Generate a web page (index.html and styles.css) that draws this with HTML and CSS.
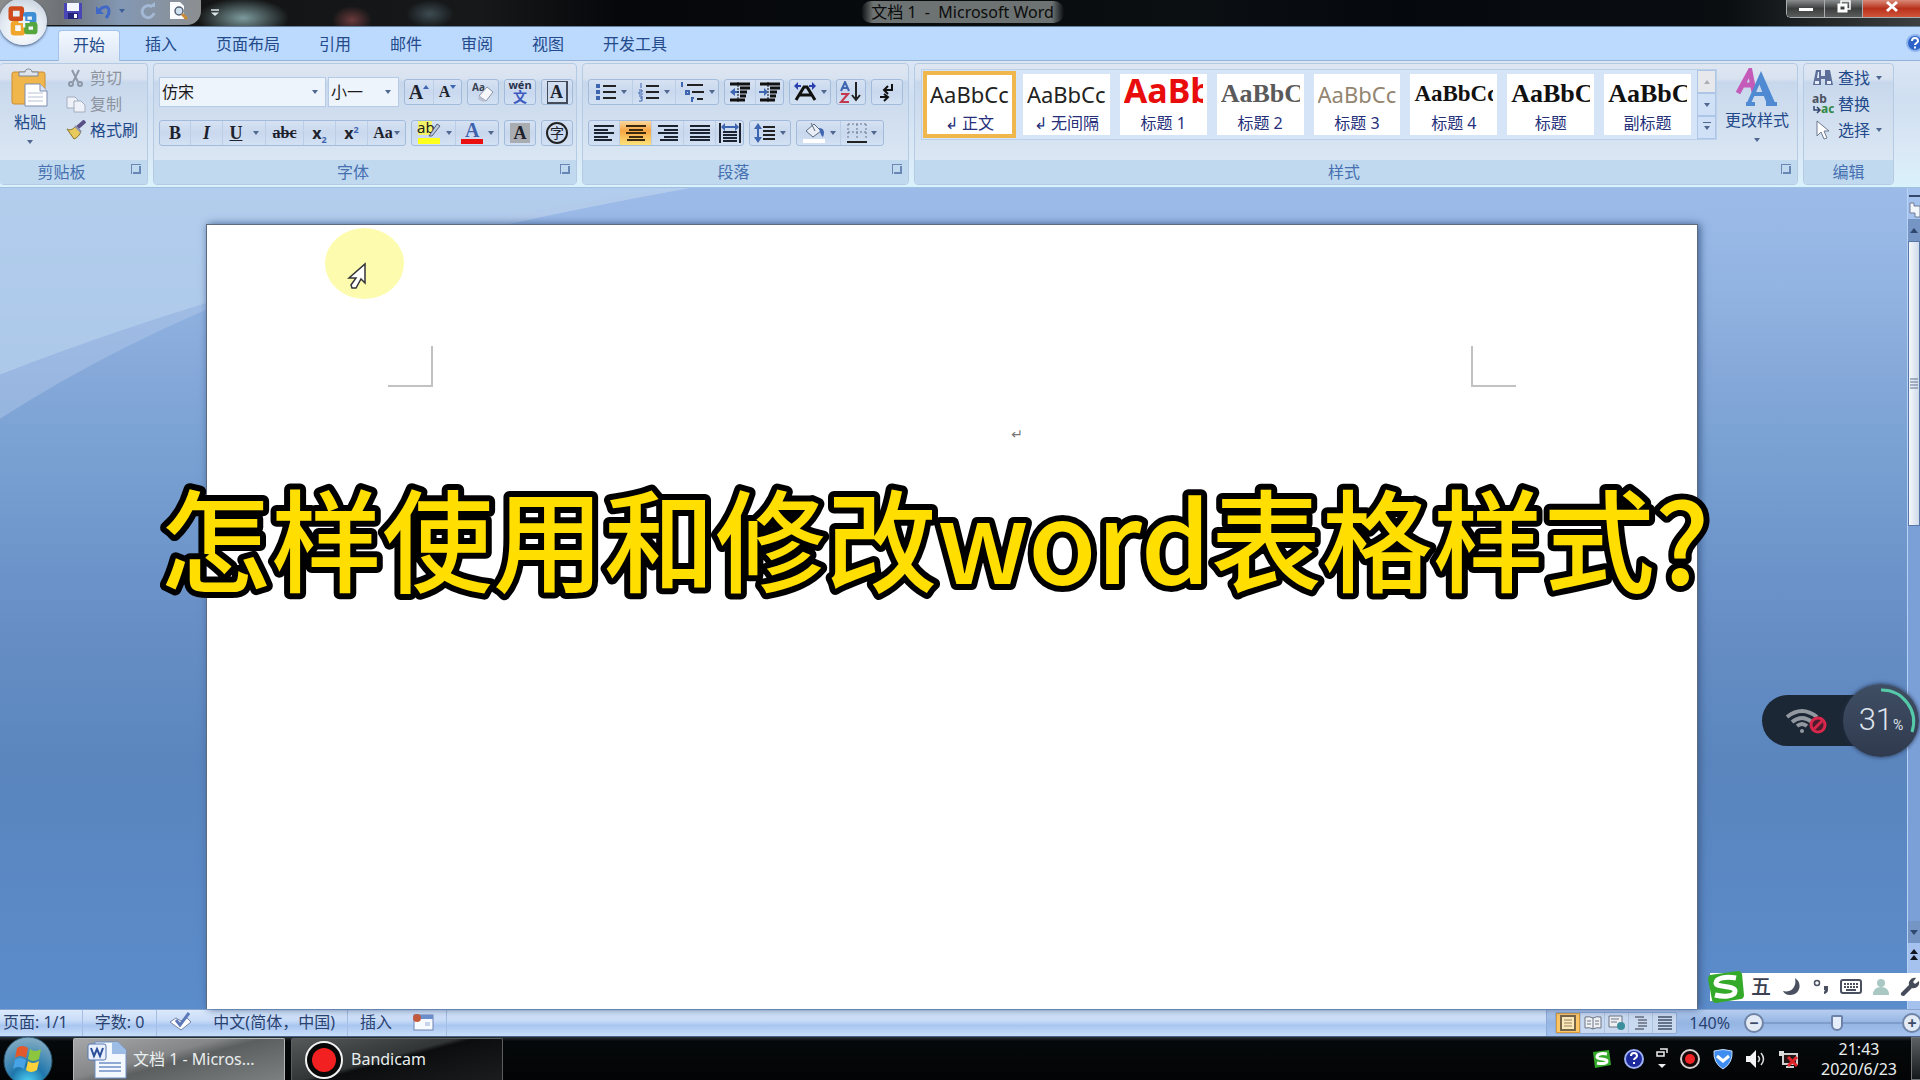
FILE: index.html
```html
<!DOCTYPE html>
<html lang="zh-CN">
<head>
<meta charset="utf-8">
<title>文档 1 - Microsoft Word</title>
<link rel="stylesheet" href="styles.css">
</head>
<body>
<div class="screen">
  <header class="titlebar">
    <div class="quick-access">
      <button class="icon-btn" aria-label="保存"><svg width="20" height="18" viewBox="0 0 20 18"><path d="M1 1h18v16H1z" fill="#4a45b5"/><path d="M4 1h12v8H4z" fill="#f4f6ff"/><path d="M5 11h10v6H5z" fill="#23237c"/><path d="M11 12h3v4h-3z" fill="#fff"/></svg></button>
      <button class="icon-btn undo" aria-label="撤消"><svg width="18" height="18" viewBox="0 0 18 18"><path d="M1 4v8h8z" fill="#3f68c8"/><path d="M4 9C7 4 14 3 14 9c0 3-1 5-3 7" fill="none" stroke="#3f68c8" stroke-width="3"/></svg></button>
      <span class="caret blue"></span>
      <button class="icon-btn redo" aria-label="重复"><svg width="18" height="18" viewBox="0 0 18 18"><path d="M13 5a6 6 0 1 0 2 6" fill="none" stroke="#a3b8d4" stroke-width="3"/><path d="M9 5h7V0z" fill="#a3b8d4"/></svg></button>
      <button class="icon-btn preview" aria-label="打印预览"><svg width="20" height="18" viewBox="0 0 20 18"><path d="M1 0h10l4 4v13H1z" fill="#fbfcff"/><circle cx="10" cy="9" r="4" fill="#cfe2f2" stroke="#555f70" stroke-width="1.5"/><path d="M13 12l5 5" stroke="#c98b35" stroke-width="3"/></svg></button>
    </div>
    <button class="icon-btn customize" aria-label="自定义快速访问工具栏"><svg width="10" height="8" viewBox="0 0 10 8"><path d="M1 1h8" stroke="#dde5ea" stroke-width="1.5"/><path d="M1 3.500h8L5 7z" fill="#dde5ea"/></svg></button>
    <h1 class="window-title"><span>文档 1&nbsp; -&nbsp; Microsoft Word</span></h1>
    <div class="window-buttons">
      <button aria-label="最小化"><svg width="14" height="14" viewBox="0 0 14 14"><path d="M0 8h14v3H0z" fill="#fff"/></svg></button>
      <button aria-label="还原"><svg width="14" height="14" viewBox="0 0 14 14"><path d="M4 4V1h9v8h-3" fill="none" stroke="#fff" stroke-width="1.500"/><path d="M2 5h7v6H2z" fill="none" stroke="#fff" stroke-width="3"/></svg></button>
      <button class="close" aria-label="关闭"><svg width="14" height="14" viewBox="0 0 14 14"><path d="M2 2l10 9M12 2L2 11" stroke="#fff" stroke-width="3"/></svg></button>
    </div>
  </header>

  <nav class="tabs">
    <button class="tab active">开始</button>
    <button class="tab">插入</button>
    <button class="tab">页面布局</button>
    <button class="tab">引用</button>
    <button class="tab">邮件</button>
    <button class="tab">审阅</button>
    <button class="tab">视图</button>
    <button class="tab">开发工具</button>
    <button class="icon-btn help" aria-label="帮助"><svg width="18" height="18" viewBox="0 0 18 18"><circle cx="9" cy="9" r="8" fill="#2f62c9" stroke="#8eb4ee" stroke-width="2"/><path d="M6 7c0-4 6-4 6 0 0 2-3 2-3 4M9 12.500v2" fill="none" stroke="#fff" stroke-width="2"/></svg></button>
  </nav>
  <button class="office-button" aria-label="Office 按钮"><svg width="38" height="38" viewBox="0 0 34 34"><g fill="none" stroke-width="4"><rect x="6" y="5" width="10" height="9" rx="1" stroke="#cf4a1c"/><rect x="19" y="10" width="8" height="7" rx="1" stroke="#3f8fd6"/><rect x="8" y="18" width="9" height="9" rx="1" stroke="#f0a52c"/><rect x="20" y="19" width="8" height="7" rx="1" stroke="#55a63c"/></g><path d="M13 17h10M18 12v10" stroke="#e9f2fb" stroke-width="2"/></svg></button>

  <div class="ribbon">
    <section class="group clipboard">
      <div class="group-body">
        <button class="big-btn"><svg width="38" height="40" viewBox="0 0 38 40"><rect x="1" y="4" width="33" height="32" rx="2" fill="#f0b54b" stroke="#c98f36"/><path d="M8 8V4h6c0-4 7-4 7 0h6v4z" fill="#dfe3ea" stroke="#7d8796"/><path d="M14 16h15l7 7v15H14z" fill="#fff" stroke="#7e8db0"/><path d="M29 16v7h7" fill="#dce5f5" stroke="#7e8db0"/><path d="M17 25h15M17 29h15M17 33h15" stroke="#b7c2d8"/></svg><span>粘贴</span><i class="caret"></i></button>
        <div class="small-stack">
          <button class="small-btn disabled"><svg width="20" height="20" viewBox="0 0 20 20" fill="none" stroke="#8f98a8" stroke-width="2"><path d="M6 2l6 12M13 2L7 14"/><circle cx="5" cy="16" r="2"/><circle cx="14" cy="16" r="2"/></svg>剪切</button>
          <button class="small-btn disabled"><svg width="20" height="20" viewBox="0 0 20 20" fill="#eef2f8" stroke="#a4aebf"><path d="M1 3h8l3 3v8H1z"/><path d="M8 7h7l4 4v7H8z"/></svg>复制</button>
          <button class="small-btn"><svg width="20" height="20" viewBox="0 0 20 20"><path d="M19 1l-8 7" stroke="#5a4f86" stroke-width="4"/><path d="M1 9c4 2 6 0 9-3l5 5c-1 4-4 7-7 8z" fill="#e7c95c" stroke="#8a7432"/><path d="M9 6l6 6" stroke="#8a93b8" stroke-width="2"/></svg>格式刷</button>
        </div>
      </div>
      <footer class="group-label"><span>剪贴板</span><button class="launcher" aria-label="剪贴板选项"></button></footer>
    </section>

    <section class="group font">
      <div class="group-body rows">
        <div class="row">
          <div class="combos">
            <label class="combo family"><select aria-label="字体"><option>仿宋</option></select><i class="caret"></i></label>
            <label class="combo size"><select aria-label="字号"><option>小一</option></select><i class="caret"></i></label>
          </div>
          <div class="seg serif"><button class="w28" aria-label="增大字体"><b class="t20">A</b><i class="tri up"></i></button><button class="w28" aria-label="缩小字体"><b class="t16">A</b><i class="tri"></i></button></div>
          <div class="seg"><button class="w30" aria-label="清除格式"><svg width="24" height="22" viewBox="0 0 24 22"><text x="1" y="10" class="svg-aa">Aa</text><path d="M8 15l8-9 6 5-7 9z" fill="#f6f7fb" stroke="#8b93a5"/><path d="M8 15l7 5-3 1-5-3z" fill="#b9c1d2"/></svg></button></div>
          <div class="seg"><button class="w30 pinyin" aria-label="拼音指南"><span>wén</span><b>文</b></button></div>
          <div class="seg serif"><button class="w30" aria-label="字符边框"><b class="boxed">A</b></button></div>
        </div>
        <div class="row">
          <div class="seg serif format">
            <button class="w30" aria-label="加粗"><b>B</b></button><button class="w32" aria-label="倾斜"><em>I</em></button><button class="w44" aria-label="下划线"><u>U</u><i class="caret"></i></button><button class="w36 strike" aria-label="删除线"><s>abc</s></button><button class="w32 sans" aria-label="下标"><b>x<sub>2</sub></b></button><button class="w32 sans" aria-label="上标"><b>x<sup>2</sup></b></button><button class="w36" aria-label="更改大小写"><span>Aa</span><i class="caret"></i></button>
          </div>
          <div class="seg">
            <button class="w44" aria-label="突出显示"><svg width="26" height="24" viewBox="0 0 26 24"><rect x="2" y="0" width="14" height="14" fill="#f3f36a"/><text x="1" y="12" class="svg-ab">ab</text><path d="M13 15L21 3l3 2-8 10z" fill="#b9c6dc" stroke="#55617b"/><path d="M2 17h22v6H2z" fill="#ffff1e"/></svg><i class="caret"></i></button>
            <button class="w44" aria-label="字体颜色"><svg width="24" height="24" viewBox="0 0 24 24"><text x="5" y="16" class="svg-a">A</text><path d="M1 18h22v5H1z" fill="#ea1010"/></svg><i class="caret"></i></button>
          </div>
          <div class="seg serif"><button class="w30" aria-label="字符底纹"><b class="shaded">A</b></button></div>
          <div class="seg"><button class="w30" aria-label="带圈字符"><span class="circled">字</span></button></div>
        </div>
      </div>
      <footer class="group-label"><span>字体</span><button class="launcher" aria-label="字体选项"></button></footer>
    </section>

    <section class="group paragraph">
      <div class="group-body rows">
        <div class="row">
          <div class="seg">
            <button class="w44" aria-label="项目符号"><svg width="22" height="20" viewBox="0 0 22 20"><path d="M8 4h13M8 10h13M8 16h13" stroke="#222" stroke-width="2"/><path d="M1 4h4M1 10h4M1 16h4" stroke="#3e65b0" stroke-width="4"/></svg><i class="caret"></i></button><button class="w44" aria-label="编号"><svg width="22" height="20" viewBox="0 0 22 20"><path d="M8 4h13M8 10h13M8 16h13" stroke="#222" stroke-width="2"/><path d="M3 1v5M1 8h3v2H1v2h4M1 14h3v5H1M2 16h2" fill="none" stroke="#3e65b0"/></svg><i class="caret"></i></button><button class="w44" aria-label="多级列表"><svg width="26" height="22" viewBox="0 0 26 22"><path d="M8 4h16M13 11h12M18 18h6" stroke="#222" stroke-width="2"/><path d="M3 1v5M7 9v4h3v-3H7M13 16v5M12 17h3" fill="none" stroke="#3e65b0" stroke-width="2"/></svg><i class="caret"></i></button>
          </div>
          <div class="seg"><button class="w30" aria-label="减少缩进"><svg width="22" height="20" viewBox="0 0 22 20"><path d="M1 2h20M11 6h10M11 10h7M11 14h6M1 18h15" stroke="#111" stroke-width="3"/><path d="M1 10l5-4v3h4v2H6v3z" fill="#3e65b0"/><path d="M9 0v20" stroke="#111" stroke-dasharray="2 1"/></svg></button><button class="w28" aria-label="增加缩进"><svg width="22" height="20" viewBox="0 0 22 20"><path d="M1 2h20M11 6h10M11 10h7M11 14h6M1 18h15" stroke="#111" stroke-width="3"/><path d="M9 10L5 6v3H0v2h5v3z" fill="#3e65b0"/><path d="M9 0v20" stroke="#111" stroke-dasharray="2 1"/></svg></button></div>
          <div class="seg"><button class="w40" aria-label="中文版式"><svg width="24" height="20" viewBox="0 0 24 20"><path d="M1 4l4-4v3h3v2H5v3zM23 4l-4-4v3h-3v2h3v3z" fill="#2b3fae"/><path d="M3 18l8-13h3l8 13M7 13h11" fill="none" stroke="#111" stroke-width="3"/></svg><i class="caret"></i></button></div>
          <div class="seg"><button class="w28" aria-label="排序"><svg width="24" height="22" viewBox="0 0 24 22"><path d="M2 10l4-9 4 9M3 7h6" fill="none" stroke="#3e65b0" stroke-width="2"/><path d="M2 13h7l-7 8h8" fill="none" stroke="#c2394f" stroke-width="2"/><path d="M17 1v17M13 14l4 5 4-5" fill="none" stroke="#222" stroke-width="2"/></svg></button></div>
          <div class="seg"><button class="w30" aria-label="显示编辑标记"><svg width="18" height="20" viewBox="0 0 18 20"><path d="M14 2v6H7M10 4L6 8l4 4" fill="none" stroke="#111" stroke-width="2"/><path d="M2 15h8M6 12l4 3-4 4" fill="none" stroke="#111" stroke-width="2"/></svg></button></div>
        </div>
        <div class="row">
          <div class="seg align">
            <button class="w30" aria-label="左对齐"><svg width="20" height="16" viewBox="0 0 20 16"><path d="M0 1h20M0 5h14M0 8h20M0 12h14M0 15h18" stroke="#1b2230" stroke-width="2"/></svg></button><button class="w32 on" aria-label="居中"><svg width="20" height="16" viewBox="0 0 20 16"><path d="M0 1h20M3 5h14M0 8h20M3 12h14M1 15h18" stroke="#3b2a0e" stroke-width="2"/></svg></button><button class="w32" aria-label="右对齐"><svg width="20" height="16" viewBox="0 0 20 16"><path d="M0 1h20M6 5h14M0 8h20M6 12h14M2 15h18" stroke="#1b2230" stroke-width="2"/></svg></button><button class="w32" aria-label="两端对齐"><svg width="20" height="16" viewBox="0 0 20 16"><path d="M0 1h20M0 5h20M0 8h20M0 12h20M0 15h20" stroke="#1b2230" stroke-width="2"/></svg></button><button class="w28" aria-label="分散对齐"><svg width="22" height="20" viewBox="0 0 22 20"><path d="M1 0v20M21 0v20M4 9h14M4 12h14M4 15h14M4 18h14" stroke="#1b2230" stroke-width="2"/><path d="M2 4l4-4v3h10V0l4 4-4 4V5H6v3z" fill="#3e65b0"/></svg></button>
          </div>
          <div class="seg"><button class="w40" aria-label="行距"><svg width="22" height="20" viewBox="0 0 22 20"><path d="M9 4h12M9 8h12M9 12h12M9 16h12" stroke="#222" stroke-width="2"/><path d="M4 0l4 6H5v8h3l-4 6-4-6h3V6H0z" fill="#3e65b0"/></svg><i class="caret"></i></button></div>
          <div class="seg"><button class="w44" aria-label="底纹"><svg width="24" height="22" viewBox="0 0 24 22"><path d="M4 9l8-7 7 7-8 6z" fill="#e9eef7" stroke="#5c6880"/><path d="M9 1l4 8" stroke="#5c6880"/><path d="M17 6c5 0 6 4 4 9-2-1-3-5-4-9" fill="#3e65b0"/><path d="M1 17h22v4H1z" fill="#fff"/></svg><i class="caret"></i></button><button class="w44" aria-label="边框"><svg width="20" height="20" viewBox="0 0 20 20"><path d="M1 1h18M1 9h18M1 1v16M10 1v16M19 1v16" stroke="#66728a" stroke-dasharray="2 2"/><path d="M0 19h20" stroke="#222" stroke-width="2"/></svg><i class="caret"></i></button></div>
        </div>
      </div>
      <footer class="group-label"><span>段落</span><button class="launcher" aria-label="段落选项"></button></footer>
    </section>

    <section class="group styles">
      <div class="group-body">
        <div class="gallery">
          <button class="style selected"><span class="sample sans">AaBbCc</span><span class="name">↲ 正文</span></button>
          <button class="style"><span class="sample sans">AaBbCc</span><span class="name">↲ 无间隔</span></button>
          <button class="style"><span class="sample h1">AaBb</span><span class="name">标题 1</span></button>
          <button class="style"><span class="sample serif gray">AaBbC</span><span class="name">标题 2</span></button>
          <button class="style"><span class="sample sans tan">AaBbCc</span><span class="name">标题 3</span></button>
          <button class="style"><span class="sample serif tight">AaBbCc</span><span class="name">标题 4</span></button>
          <button class="style"><span class="sample serif">AaBbC</span><span class="name">标题</span></button>
          <button class="style"><span class="sample serif">AaBbC</span><span class="name">副标题</span></button>
          <div class="gallery-scroll"><button class="off" aria-label="上一行"><i class="caret flip"></i></button><button aria-label="下一行"><i class="caret"></i></button><button aria-label="更多样式"><i class="caret line"></i></button></div>
        </div>
        <button class="big-btn change"><svg width="42" height="38" viewBox="0 0 42 38"><path d="M2 25L14 3l4 21M6 17h11" fill="none" stroke="#c55bb8" stroke-width="5"/><path d="M13 35L25 8l12 27M17 26h15M10 36h9M30 36h11" fill="none" stroke="#4f8ad3" stroke-width="4"/><path d="M25 6l13 30h-7L22 13z" fill="#4f8ad3"/></svg><span>更改样式</span><i class="caret"></i></button>
      </div>
      <footer class="group-label"><span>样式</span><button class="launcher" aria-label="样式选项"></button></footer>
    </section>

    <section class="group editing">
      <div class="group-body">
        <div class="small-stack">
          <button class="small-btn"><svg width="22" height="20" viewBox="0 0 22 20"><path d="M4 2h5v6h4V2h5l3 15h-8v-6H9v6H1z" fill="#5d6f98"/><path d="M3 13h4v3H3zM15 13h4v3h-4zM6 4h1v6H5z" fill="#e6edf8"/></svg>查找<i class="caret"></i></button>
          <button class="small-btn"><svg width="22" height="20" viewBox="0 0 22 20"><text x="0" y="9" class="svg-rep">ab</text><text x="9" y="19" class="svg-rep green">ac</text><path d="M2 12v4h5M5 13l3 3-3 3" fill="none" stroke="#35456b" stroke-width="1.500"/></svg>替换</button>
          <button class="small-btn"><svg width="22" height="20" viewBox="0 0 22 20"><path d="M5 1v15l4-4 3 7 3-1-3-7h5z" fill="#fff" stroke="#6e7890"/></svg>选择<i class="caret"></i></button>
        </div>
      </div>
      <footer class="group-label"><span>编辑</span></footer>
    </section>
  </div>

  <main class="workspace">
    <svg class="swoosh" viewBox="0 0 1920 822" preserveAspectRatio="none"><path d="M0 0H690Q300 70 0 187z" fill="#b9d3ee" opacity=".75"/><path d="M690 0Q300 70 0 187V231Q300 40 690 0z" fill="#b4c9ec" opacity=".45"/></svg>
    <article class="page">
      <div class="corners"><span class="corner left"></span><span class="corner right"></span></div>
      <p class="paragraph-mark">↵</p>
    </article>
    <aside class="scrollbar">
      <button class="ruler" aria-label="标尺"><svg width="12" height="24" viewBox="0 0 12 24"><path d="M1 2h11" stroke="#34496d" stroke-width="2"/><path d="M2 9h4v3h6v11H7v-4H2z" fill="#f3f6fb" stroke="#6d7c96"/></svg></button>
      <button class="arrow" aria-label="向上滚动"><i class="caret flip"></i></button>
      <div class="track"><div class="thumb"><svg width="8" height="12" viewBox="0 0 8 12"><path d="M0 1h8M0 4h8M0 7h8M0 10h8" stroke="#5f708c"/></svg></div></div>
      <button class="arrow" aria-label="向下滚动"><i class="caret"></i></button>
      <button class="jump" aria-label="前一页"><svg width="10" height="12" viewBox="0 0 10 12"><path d="M5 0l4 5H1zM5 6l4 5H1z" fill="#10151f"/></svg></button>
    </aside>
    <div class="pointer"><svg width="20" height="28" viewBox="0 0 20 28"><path d="M18 2v19l-4-4-5 9H5l-1-3 5-7H2z" fill="#fff" stroke="#33333b" stroke-width="1.500"/></svg></div>
    <h2 class="caption"><svg width="1560" height="150" viewBox="0 0 1560 150"><text x="0" y="114">怎样使用和修改word表格样式?</text></svg></h2>
    <div class="battery">
      <svg class="wifi" width="42" height="26" viewBox="0 0 42 26"><g fill="none" stroke="#9298a0" stroke-width="4"><path d="M1 9q15-12 30 0"/><path d="M6 14q10-8 20 0"/><path d="M11 18q5-4 10 0"/></g><circle cx="16" cy="23" r="2" fill="#9298a0"/><circle cx="32" cy="17" r="7" fill="#4b1c2d" stroke="#d9274c" stroke-width="3"/><path d="M28 21l8-8" stroke="#d9274c" stroke-width="3"/></svg>
      <div class="gauge"><svg class="arc" width="76" height="76" viewBox="0 0 76 76"><path d="M38 6a32 32 0 0 1 31 42" fill="none" stroke="#55c9a8" stroke-width="3"/></svg><span>31</span><small>%</small></div>
    </div>
    <div class="ime">
      <svg class="sogou" width="38" height="34" viewBox="0 0 38 34"><path d="M3 5l28-4q3 0 4 3l2 21q0 3-3 4L9 33q-3 0-4-3L1 9q0-3 2-4z" fill="#35a929"/><path d="M29 8C19 6 9 8 9 13s19 2 19 8-12 6-20 4" fill="none" stroke="#fff" stroke-width="5"/></svg>
      <span class="ime-mode">五</span>
      <svg width="20" height="20" viewBox="0 0 20 20"><path d="M13 1c8 5 5 17-5 17-4 0-6-2-7-4 8 2 14-4 12-13z" fill="#4a5060"/></svg>
      <svg width="18" height="20" viewBox="0 0 18 20"><circle cx="5" cy="6" r="2.500" fill="none" stroke="#4a5060" stroke-width="1.500"/><path d="M12 9h4v4q0 3-4 4v-2l1-2h-1z" fill="#4a5060"/></svg>
      <svg width="22" height="20" viewBox="0 0 22 20"><rect x="1" y="3" width="20" height="13" rx="2" fill="none" stroke="#4a5060" stroke-width="2"/><path d="M4 7h14M4 10h14" stroke="#4a5060" stroke-width="2" stroke-dasharray="2 1"/><path d="M6 13h10" stroke="#4a5060" stroke-width="2"/></svg>
      <svg width="18" height="20" viewBox="0 0 18 20"><circle cx="9" cy="6" r="4" fill="#a9c8c4"/><path d="M1 18q0-8 8-8t8 8z" fill="#a9c8c4"/></svg>
      <svg width="20" height="20" viewBox="0 0 20 20"><path d="M1 16l8-8c-1-4 3-8 7-7l-3 4 2 2 4-3c1 5-3 8-7 7l-8 8q-4 0-3-3z" fill="#454b58"/></svg>
    </div>
  </main>

  <footer class="statusbar">
    <span class="cell">页面: 1/1</span>
    <span class="cell">字数: 0</span>
    <span class="cell last"><svg width="24" height="20" viewBox="0 0 24 20"><path d="M1 10l6-4 5 3 6-3 4 4-10 8z" fill="#fff" stroke="#7384a6"/><path d="M7 8l4 5L20 1" fill="none" stroke="#5b78b8" stroke-width="3"/></svg></span>
    <span class="cell lang">中文(简体，中国)</span>
    <span class="cell insert">插入<svg width="22" height="18" viewBox="0 0 22 18"><rect x="2" y="2" width="19" height="15" fill="#f7faff" stroke="#6e84b2"/><path d="M2 2h19v4H2z" fill="#6d8fce"/><circle cx="5" cy="5" r="4" fill="#c65a3c"/><path d="M13 9h5v4h-5z" fill="#c7d4ec"/></svg></span>
    <div class="view-tools">
      <div class="views">
        <button class="on" aria-label="页面视图"><svg width="18" height="16" viewBox="0 0 18 16"><path d="M2 1h14v14H2z" fill="#fbe8b8" stroke="#756448" stroke-width="2"/><path d="M5 5h8M5 8h8M5 11h8" stroke="#98825c"/></svg></button>
        <button aria-label="阅读版式视图"><svg width="18" height="16" viewBox="0 0 18 16"><path d="M1 2q5-1 8 1 3-2 8-1v11q-5-1-8 1-3-2-8-1zM9 3v11M3 6h4M3 9h4M11 6h4M11 9h4" fill="#eef0f2" stroke="#6d7486"/></svg></button>
        <button aria-label="Web 版式视图"><svg width="18" height="16" viewBox="0 0 18 16"><path d="M1 1h13v11H1z" fill="#eef0f2" stroke="#6d7486"/><path d="M3 4h8M3 7h6" stroke="#6d7486"/><circle cx="13" cy="11" r="4" fill="#3c8f9c"/></svg></button>
        <button aria-label="大纲视图"><svg width="18" height="16" viewBox="0 0 18 16"><path d="M3 2h9M6 5h9M6 8h9M6 11h9M3 14h9" stroke="#7e879a" stroke-width="2"/></svg></button>
        <button aria-label="普通视图"><svg width="18" height="16" viewBox="0 0 18 16"><path d="M2 2h14M2 5h14M2 8h14M2 11h14M2 14h14" stroke="#66718a" stroke-width="2"/></svg></button>
      </div>
      <button class="zoom-level">140%</button>
      <button class="round" aria-label="缩小">−</button>
      <input class="zoom" type="range" min="0" max="100" value="53" aria-label="显示比例">
      <button class="round" aria-label="放大">+</button>
    </div>
  </footer>

  <footer class="taskbar">
    <button class="start" aria-label="开始菜单"><svg width="50" height="44" viewBox="0 0 50 44"><defs><radialGradient id="orb" cx=".5" cy=".95" r=".9"><stop offset="0" stop-color="#4fd6f7"/><stop offset=".4" stop-color="#1f77ad"/><stop offset="1" stop-color="#7fa9c2"/></radialGradient></defs><circle cx="25" cy="24" r="24" fill="url(#orb)" stroke="#2b5872"/><path d="M14 11q5-4 11 0l-2 10q-6-4-11 0z" fill="#e4592b"/><path d="M27 12q5 4 11 0l-2 10q-6 4-11 0z" fill="#8cc63e"/><path d="M12 23q5-4 11 0l-2 9q-6-4-11 0z" fill="#48a3e6"/><path d="M25 24q5 4 11 0l-2 9q-6 4-11 0z" fill="#fcd23c"/></svg></button>
    <button class="task active"><svg width="40" height="38" viewBox="0 0 40 38"><path d="M8 1h23l8 8v28H8z" fill="#f3f7fe" stroke="#6f8fc4"/><path d="M25 1h6l8 8v4H25z" fill="#9dbce6"/><path d="M12 22h22M12 26h22M12 30h22" stroke="#8fa9d4" stroke-width="2"/><rect x="1" y="3" width="18" height="16" rx="2" fill="#e9f0fb" stroke="#5577b4"/><path d="M4 7l3 8 3-7 3 7 3-8" fill="none" stroke="#2c4f9b" stroke-width="2"/></svg><span>文档 1 - Micros...</span></button>
    <button class="task"><svg width="42" height="40" viewBox="0 0 42 40"><circle cx="21" cy="20" r="18" fill="#080808" stroke="#f2f2f2" stroke-width="2"/><circle cx="21" cy="20" r="12" fill="#f22020"/></svg><span>Bandicam</span></button>
    <div class="tray">
      <svg width="20" height="20" viewBox="0 0 20 20"><path d="M1 3l16-2 2 15-16 3z" fill="#35a929"/><path d="M15 5C9 4 5 5 5 8s10 1 10 4-6 3-10 2" fill="none" stroke="#fff" stroke-width="3"/></svg>
      <svg width="22" height="22" viewBox="0 0 22 22"><circle cx="11" cy="11" r="9" fill="#1c2a9c" stroke="#9eb0f2" stroke-width="2"/><path d="M8 8c0-4 6-4 6 0 0 2-3 2-3 4M11 14v2" fill="none" stroke="#fff" stroke-width="2"/></svg>
      <svg width="12" height="22" viewBox="0 0 12 22"><path d="M4 1h7v4M1 4h7v4H1z" fill="none" stroke="#eee" stroke-width="1.500"/><path d="M2 16h8l-4 4z" fill="#eee"/></svg>
      <svg width="22" height="22" viewBox="0 0 22 22"><circle cx="11" cy="11" r="9" fill="#160808" stroke="#d8d0d0" stroke-width="2"/><circle cx="11" cy="11" r="5" fill="#ee2222"/></svg>
      <svg width="22" height="22" viewBox="0 0 22 22"><path d="M2 3q9-3 18 0 1 12-9 18Q1 15 2 3z" fill="#3f8df0" stroke="#c8e0ff"/><path d="M5 8l6 5 6-5" fill="none" stroke="#fff" stroke-width="3"/></svg>
      <svg width="22" height="22" viewBox="0 0 22 22"><path d="M1 8h4l6-6v18l-6-6H1z" fill="#f4f4f4"/><path d="M13 8q3 3 0 6M16 5q5 6 0 12" fill="none" stroke="#ddd" stroke-width="1.500"/></svg>
      <svg width="22" height="22" viewBox="0 0 22 22"><path d="M5 6h14v10H5zM8 19h8" fill="#241414" stroke="#cfcfcf" stroke-width="2"/><path d="M1 3h5v5H1z" fill="#ddd"/><path d="M10 9l9 9M19 9l-9 9" stroke="#e0252b" stroke-width="3"/></svg>
    </div>
    <time class="clock"><span>21:43</span><span>2020/6/23</span></time>
    <button class="show-desktop" aria-label="显示桌面"></button>
  </footer>
</div>
</body>
</html>
```
FILE: styles.css
```css
* { box-sizing: border-box; }

body {
  margin: 0;
  font: 16px/20px "Noto Sans", "Noto Sans CJK SC", sans-serif;
  color: #234a8a;
}

button {
  border: 0;
  padding: 0;
  margin: 0;
  background: none;
  color: inherit;
  font: inherit;
}

svg { display: block; flex: none; }

.screen {
  position: relative;
  display: flex;
  flex-direction: column;
  height: 100vh;
  overflow: hidden;
}

.caret {
  flex: none;
  display: block;
  border: 3px solid transparent;
  border-top: 4px solid #50678f;
  border-bottom: 0;
}
.caret.blue { border-top-color: #3f5f98; }
.caret.flip { transform: rotate(180deg); }
.caret.line { position: relative; }
.caret.line::before {
  content: "";
  position: absolute;
  left: -4px;
  top: -8px;
  width: 8px;
  height: 1px;
  background: #50678f;
}

/* Title bar */
.titlebar {
  flex: none;
  display: flex;
  align-items: flex-start;
  height: 27px;
  background:
    radial-gradient(ellipse 46px 20px at 243px 18px, #7c9a9c, transparent),
    radial-gradient(ellipse 20px 14px at 352px 20px, #6b3a3c, transparent),
    radial-gradient(ellipse 24px 14px at 430px 14px, #3d4c52, transparent),
    linear-gradient(90deg, #111 0, #16181a 480px, #05070a 620px, #0b0f12 1200px, #05080d 1400px, #0b0e11 90%, #3c4040);
  border-bottom: 1px solid #66809c;
}
.quick-access {
  flex: none;
  display: flex;
  align-items: center;
  width: 201px;
  height: 25px;
  padding: 0 0 4px 63px;
  background: linear-gradient(90deg, #8d8d8d, #6e7276 30%, #8398b4 60%, #8c8e90);
  border-radius: 0 0 14px 0;
}
.undo { margin-left: 12px; }
.quick-access .caret { margin-left: 6px; }
.redo { margin-left: 14px; }
.preview { margin-left: 12px; }
.customize { margin: 9px 0 0 9px; }
.window-title {
  flex: 1;
  margin: 0 -139px 0 -220px;
  text-align: center;
  font-size: 16px;
  line-height: 24px;
  font-weight: 400;
  color: #0c0c0c;
}
.window-title span {
  padding: 0 10px;
  background: linear-gradient(90deg, transparent, #6d7373 12px, #6d7373 calc(100% - 12px), transparent);
  border-radius: 10px;
}
.window-buttons {
  display: flex;
  width: 134px;
  height: 18px;
  border: 1px solid #a9adad;
  border-top: 0;
  border-right: 0;
  border-radius: 0 0 0 5px;
  overflow: hidden;
}
.window-buttons button {
  display: flex;
  justify-content: center;
  width: 38px;
  background: linear-gradient(#8b8e8e, #3c3e3e 50%, #5a5d5d);
  border-right: 1px solid #a9adad;
}
.window-buttons .close {
  flex: 1;
  border: 0;
  background: linear-gradient(#d98a78, #b8311b 50%, #d0553a);
}

/* Tabs */
.tabs {
  flex: none;
  display: flex;
  align-items: flex-end;
  height: 34px;
  padding: 0 0 0 58px;
  background: #bcd9fe;
  border-bottom: 1px solid #93b3dd;
}
.tab {
  height: 30px;
  padding: 0 20px 3px 19px;
  white-space: nowrap;
}
.tab.active {
  width: 62px;
  padding: 0 0 2px;
  margin-right: 6px;
  margin-bottom: -1px;
  height: 31px;
  background: linear-gradient(#f3f8ff, #dce6f4);
  border: 1px solid #a5c2ea;
  border-bottom: 0;
  border-radius: 4px 4px 0 0;
}
.help { margin: 0 -4px 8px auto; }

.office-button {
  position: absolute;
  left: -1px;
  top: -2px;
  display: flex;
  align-items: center;
  justify-content: center;
  width: 48px;
  height: 47px;
  border-radius: 50%;
  background: radial-gradient(circle at 50% 70%, #fff, #e4ebf3 50%, #b9c4d2);
  box-shadow: 0 1px 3px #40536e;
}

/* Ribbon */
.ribbon {
  flex: none;
  display: flex;
  gap: 5px;
  height: 127px;
  padding: 2px 26px 2px 0;
  background: linear-gradient(#dbe6f5, #cfdff1 30%, #dbe8f6 70%, #d9f2fc);
  border-bottom: 1px solid #9fc0e0;
}
.group {
  display: flex;
  flex-direction: column;
  min-width: 0;
  border: 1px solid #b5cbe4;
  border-radius: 4px;
  background: linear-gradient(#dfe6f2, #d8e2f0 15px, #c8d8ec 18px, #dae6f3 96px);
  overflow: hidden;
}
.group-body { flex: 1; display: flex; min-width: 0; }
.group-label {
  display: flex;
  align-items: center;
  height: 24px;
  background: #c0d9ef;
  color: #4670b0;
}
.group-label span { flex: 1; text-align: center; padding-right: 24px; }
.editing .group-label span { padding-right: 0; }
.launcher {
  position: relative;
  width: 10px;
  height: 10px;
  margin: 0 6px 6px -16px;
  border-left: 1px solid #6987b5;
  border-top: 1px solid #6987b5;
}
.launcher::after {
  content: "";
  position: absolute;
  right: 0;
  bottom: 0;
  width: 6px;
  height: 6px;
  border-right: 2px solid #6987b5;
  border-bottom: 2px solid #6987b5;
}
.clipboard { flex: 0 0 148px; border-left: 0; }
.font { flex: 0 0 424px; }
.paragraph { flex: 0 0 327px; }
.styles { flex: 1; }
.editing { flex: 0 0 91px; }

.big-btn {
  display: flex;
  flex-direction: column;
  align-items: center;
  width: 60px;
  padding-top: 4px;
}
.big-btn span { margin: 4px 0 8px; line-height: 20px; }
.small-stack { display: flex; flex-direction: column; gap: 5px; padding-top: 3px; }
.small-btn { display: flex; align-items: center; gap: 4px; height: 21px; white-space: nowrap; }
.clipboard .small-stack { padding-left: 6px; }
.editing .small-stack { padding-left: 8px; }
.small-btn .caret { margin-left: 2px; }
.small-btn.disabled { color: #8d939d; }

.rows { flex-direction: column; gap: 13px; padding: 13px 0 0 5px; }
.row { display: flex; align-items: center; gap: 5px; }
.font .row:first-child { height: 30px; }
.paragraph .row:first-child { height: 30px; }
.combos { display: flex; gap: 2px; }
.combo {
  display: flex;
  align-items: center;
  height: 30px;
  padding-right: 7px;
  background: #eef4fc;
  border: 1px solid #b5cbe6;
}
.combo select {
  flex: 1;
  min-width: 0;
  appearance: none;
  border: 0;
  padding: 0 2px;
  background: none;
  font: inherit;
  line-height: 24px;
  color: #1a1a1a;
}
.family { width: 167px; }
.size { width: 71px; }

.seg {
  display: flex;
  height: 26px;
  border: 1px solid #a3bbdb;
  border-radius: 3px;
  background: linear-gradient(#d6e2f3, #c9d8ee 50%, #d3e1f3);
}
.seg button {
  display: flex;
  align-items: center;
  justify-content: center;
  gap: 4px;
  color: #1d222c;
}
.seg button + button { border-left: 1px solid #bccde6; }
.w28 { width: 28px; }
.w30 { width: 30px; }
.w32 { width: 32px; }
.w36 { width: 38px; }
.w40 { width: 40px; }
.w44 { width: 43px; }
.format .caret { margin-left: 6px; }
.format .w36 .caret { margin-left: -3px; }
.seg.serif, .serif { font-family: "Liberation Serif", "Noto Sans CJK SC", serif; }
.seg.serif b, .seg.serif em, .seg.serif u { font-size: 18px; }
.seg.serif u, .seg.serif em { font-weight: 700; }
.seg.serif .t20 { font-size: 20px; }
.seg.serif .t16 { font-size: 16px; }
.seg.format .sans b { font-size: 16px; }
.seg .strike s { font-size: 16px; font-weight: 700; }
.seg.format .w36 span { font: 700 16px/20px "Liberation Serif", serif; }
.sans { font-family: "Noto Sans", "Noto Sans CJK SC", sans-serif; }
.seg sub, .seg sup { font-size: 9px; line-height: 0; color: #3e65b0; }
.seg .tri {
  align-self: flex-start;
  margin: 5px 0 0 -4px;
  border: 3px solid transparent;
  border-top: 4px solid #3e65b0;
  border-bottom: 0;
}
.seg .tri.up { border-top: 0; border-bottom: 4px solid #3e65b0; }
.seg .pinyin { flex-direction: column; gap: 0; color: #27324c; }
.pinyin span { font: 700 11px/10px "Noto Sans", sans-serif; }
.pinyin b { font-size: 14px; line-height: 14px; color: #3e5bc0; }
.seg .boxed { width: 21px; line-height: 20px; border: 1px solid #444c5c; border-right-width: 2px; border-bottom-width: 2px; }
.seg .shaded { width: 20px; line-height: 20px; background: #a9acb0; }
.circled { width: 22px; height: 22px; border: 2px solid #222; border-radius: 50%; font-size: 14px; line-height: 18px; }
.seg .on { background: linear-gradient(#fbd9a0, #f6a542 40%, #fde27a); }

.svg-aa { font: 700 10px "Noto Sans", sans-serif; fill: #3b4252; }
.svg-ab { font: 15px "Noto Sans", sans-serif; fill: #222; }
.svg-a { font: 700 20px "Liberation Serif", serif; fill: #3e62ae; }
.svg-rep { font: 700 12px "Noto Sans", sans-serif; fill: #4c5160; }
.svg-rep.green { fill: #2f8a45; }

/* Style gallery */
.gallery {
  flex: 1;
  min-width: 0;
  display: flex;
  gap: 10px;
  height: 71px;
  margin: 5px 0 0 6px;
  padding: 4px 0 0 4px;
  background: #d5e5f7;
  border: 1px solid #bcd0e8;
}
.style {
  flex: 1 1 0;
  min-width: 0;
  display: flex;
  flex-direction: column;
  height: 61px;
  padding: 0 4px;
  background: #fff;
}
.style.selected { outline: 4px solid #efb74c; outline-offset: -1px; }
.sample {
  height: 39px;
  width: 100%;
  overflow: hidden;
  text-align: left;
  font-size: 22px;
  line-height: 40px;
  color: #222;
  white-space: nowrap;
}
.sample.serif { font-family: "Liberation Serif", serif; font-weight: 700; font-size: 26px; color: #111; }
.sample.serif.tight { font-size: 23px; }
.sample.serif.gray { color: #5a5a5a; }
.sample.tan { color: #93856f; }
.sample.h1 { font-size: 34px; line-height: 32px; font-weight: 700; color: #e80c0c; }
.name { line-height: 20px; width: 100%; text-align: center; color: #252f7a; white-space: nowrap; }
.gallery-scroll { flex: none; display: flex; flex-direction: column; width: 19px; margin: -4px 0 0 -4px; }
.gallery-scroll button {
  flex: 1;
  display: flex;
  align-items: center;
  justify-content: center;
  background: #d0e0f6;
  border: 1px solid #adc5e6;
}
.gallery-scroll .off { background: #e6e8ec; }
.gallery-scroll .off .caret { border-top-color: #a9adb5; }
.change { flex: none; width: 80px; }
.change span { white-space: nowrap; }

/* Document area */
.workspace {
  position: relative;
  flex: 1;
  min-height: 0;
  display: flex;
  justify-content: space-between;
  padding-left: 206px;
  background: linear-gradient(#9dbbe9, #92b4e2 12%, #86a9da 22%, #7ba3d3 30%, #6a91c8 50%, #5a85bd 70%, #5b8ccb);
}
.swoosh { position: absolute; left: 0; top: 0; width: 100%; height: 100%; }
.page {
  position: relative;
  flex: 0 1 1492px;
  margin-top: 36px;
  padding: 121px 181px 0;
  background: #fff;
  border: 1px solid #5d6b80;
  border-bottom: 0;
  box-shadow: 2px 0 8px #3f5f8f;
}
.corners { display: flex; justify-content: space-between; }
.corner { width: 45px; height: 41px; border-bottom: 2px solid #c2c2c2; }
.corner.left { border-right: 2px solid #c2c2c2; }
.corner.right { border-left: 2px solid #c2c2c2; }
.paragraph-mark {
  margin: 37px 0 0 130px;
  text-align: center;
  font: 14px/20px "DejaVu Sans", sans-serif;
  color: #777;
}
.scrollbar {
  position: relative;
  display: flex;
  flex-direction: column;
  align-items: center;
  width: 13px;
  padding: 4px 0 42px;
  background: #a5c2ee;
  border-left: 1px solid #b9d3f5;
}
.ruler { height: 27px; }
.arrow {
  display: flex;
  align-items: center;
  justify-content: center;
  width: 100%;
  height: 22px;
  background: #7595c4;
}
.arrow .caret { border-top-color: #31486e; border-width: 5px 4px 0; }
.track { flex: 1; width: 100%; background: #7ba0d8; }
.thumb {
  display: flex;
  align-items: center;
  justify-content: center;
  height: 285px;
  background: linear-gradient(90deg, #f5f8fc, #cfdae9);
  border: 1px solid #5877a8;
}
.jump { height: 24px; }

.pointer {
  position: absolute;
  left: 325px;
  top: 40px;
  display: flex;
  justify-content: center;
  align-items: flex-end;
  width: 79px;
  height: 71px;
  padding: 0 15px 9px 0;
  border-radius: 50%;
  background: #fdfcae;
}
.caption {
  position: absolute;
  left: 160px;
  top: 282px;
  margin: 0;
}
.caption text {
  font: 500 111px "Noto Sans CJK SC", sans-serif;
  fill: #ffde00;
  stroke: #000;
  stroke-width: 12px;
  stroke-linejoin: round;
  paint-order: stroke fill;
}
.battery {
  position: absolute;
  right: 1px;
  top: 496px;
  display: flex;
  align-items: center;
}
.battery::before {
  content: "";
  position: absolute;
  left: 0;
  top: 11px;
  width: 120px;
  height: 51px;
  border-radius: 26px;
  background: #1c2735;
}
.wifi { position: relative; margin: 0 15px 0 24px; }
.gauge {
  position: relative;
  display: flex;
  align-items: baseline;
  justify-content: center;
  width: 76px;
  height: 73px;
  border-radius: 50%;
  background: linear-gradient(#3f4e64, #303a4e);
  box-shadow: 0 0 4px #22304a;
  color: #dfe4ec;
  font: 300 31px/72px Roboto, sans-serif;
}
.gauge small { font-size: 14px; font-weight: 400; }
.arc { position: absolute; left: 0; top: 0; }
.ime {
  position: absolute;
  right: 0;
  bottom: 8px;
  display: flex;
  align-items: center;
  gap: 10px;
  height: 28px;
  background: #fff;
}
.sogou { margin-left: -3px; margin-right: -4px; }
.ime-mode { width: 20px; margin-right: 1px; font-size: 20px; font-weight: 500; color: #3b4150; }

/* Status bar */
.statusbar {
  flex: none;
  display: flex;
  height: 28px;
  background: linear-gradient(#dbe9fb, #c9dcf8 40%, #a9c6f0 60%, #c9dffa);
  border-top: 1px solid #86a4cf;
  border-bottom: 1px solid #4a6186;
  color: #2a4270;
}
.cell {
  display: flex;
  align-items: center;
  padding: 0 12px 2px;
  border-right: 1px solid #a5bee3;
  white-space: nowrap;
}
.cell:first-child { padding-left: 3px; padding-right: 14px; }
.cell.last { border: 0; padding-right: 8px; }
.insert { gap: 20px; }
.view-tools {
  display: flex;
  align-items: center;
  margin-left: auto;
  padding: 0 0 1px 8px;
  background: linear-gradient(#b6cdf0, #94b4e2 50%, #a5c3ee);
  border-left: 1px solid #8eaad6;
}
.views { display: flex; height: 22px; border: 1px solid #8fa9d2; border-radius: 2px; background: #c9d9ef; }
.views button { display: flex; align-items: center; justify-content: center; width: 24px; }
.views button + button { border-left: 1px solid #adc2e1; }
.views .on { background: #fbc667; box-shadow: inset 0 0 0 1px #d99a3c; }
.zoom-level { margin: 0 14px 0 12px; }
.round {
  flex: none;
  width: 20px;
  height: 20px;
  border: 2px solid #6f83a6;
  border-radius: 50%;
  background: #e3ebf6;
  font-weight: 700;
  line-height: 14px;
  color: #3b4a66;
}
.round:last-child { margin-right: -2px; }
.zoom { appearance: none; width: 138px; height: 20px; margin: 0; background: linear-gradient(#7f9ccb, #7f9ccb) center / 100% 2px no-repeat; }
.zoom::-webkit-slider-thumb {
  appearance: none;
  width: 12px;
  height: 16px;
  border: 2px solid #6d82aa;
  border-radius: 2px 2px 6px 6px;
  background: #e6eefa;
}

/* Taskbar */
.taskbar {
  flex: none;
  display: flex;
  height: 43px;
  background: linear-gradient(#2c3134, #06090b 4px, #020405);
  color: #e9eeee;
}
.start { width: 50px; height: 43px; margin: 0 20px 0 3px; overflow: hidden; }
.task {
  display: flex;
  align-items: center;
  gap: 6px;
  width: 212px;
  margin: 1px 6px 0 0;
  padding: 1px 0 0 11px;
  background: linear-gradient(165deg, #56595a, #323536 45%, #0b0d0e 50%, #1a1c1d);
  border: 1px solid #5a5e60;
  border-bottom: 0;
  border-radius: 2px 2px 0 0;
  white-space: nowrap;
}
.task.active { padding-left: 13px; background: linear-gradient(165deg, #a5a7a8, #848687 40%, #5c5f60 52%, #7d8081); border-color: #b4b7b8; }
.task span { padding-bottom: 2px; }
.tray { display: flex; align-items: center; gap: 11px; margin-left: auto; }
.clock {
  display: flex;
  flex-direction: column;
  align-items: center;
  padding: 2px 0 0;
  margin: 0 14px 0 21px;
  font-size: 16px;
  line-height: 20px;
}
.show-desktop { width: 9px; background: linear-gradient(#5b6062, #15181a); border: 1px solid #6d7274; border-right: 0; }
```
